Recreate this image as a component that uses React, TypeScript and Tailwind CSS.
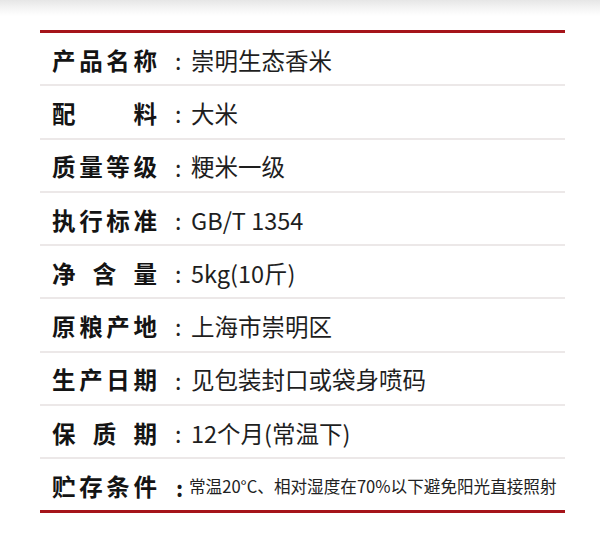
import React from "react";

const rows: { label: string; value: string; small?: boolean }[] = [
  { label: "产品名称", value: "崇明生态香米" },
  { label: "配料", value: "大米" },
  { label: "质量等级", value: "粳米一级" },
  { label: "执行标准", value: "GB/T 1354" },
  { label: "净含量", value: "5kg(10斤)" },
  { label: "原粮产地", value: "上海市崇明区" },
  { label: "生产日期", value: "见包装封口或袋身喷码" },
  { label: "保质期", value: "12个月(常温下)" },
  { label: "贮存条件", value: "常温20°C、相对湿度在70%以下避免阳光直接照射", small: true },
];

export default function App() {
  return (
    <div
      className="w-[600px] h-[541px] bg-white overflow-hidden"
      style={{ fontFamily: '"Noto Sans CJK SC", "Noto Sans", sans-serif' }}
    >
      <div className="h-[16px] bg-gradient-to-b from-[#e6e6e6] via-[#f4f4f4] to-white" />
      <div className="h-[14px]" />
      <div className="ml-[40px] w-[525px]">
        <div className="h-[3px] bg-[#a5141a]" />
        {rows.map((r, i) => (
          <div key={r.label}>
            <div className="h-[51.25px] flex items-center pt-[4px] pl-[12px]">
              <div className="w-[105px] flex justify-between text-[23.5px] font-bold text-[#141414] leading-none">
                {Array.from(r.label).map((c, j) => (
                  <span key={j}>{c}</span>
                ))}
              </div>
              {r.small ? (
                <>
                  <span className="ml-[19px] w-[13px] text-[22px] font-bold text-[#1a1a1a] leading-none">:</span>
                  <span className="text-[16.6px] text-[#222] leading-none whitespace-nowrap">{r.value}</span>
                </>
              ) : (
                <>
                  <span className="ml-[18px] w-[16px] text-[23px] text-[#222] leading-none">:</span>
                  <span className="text-[23.5px] text-[#1e1e1e] leading-none whitespace-nowrap">{r.value}</span>
                </>
              )}
            </div>
            {i < rows.length - 1 ? (
              <div className="h-[2px] bg-[#ece8e8]" />
            ) : (
              <div className="h-[3px] bg-[#a5141a]" />
            )}
          </div>
        ))}
      </div>
    </div>
  );
}
